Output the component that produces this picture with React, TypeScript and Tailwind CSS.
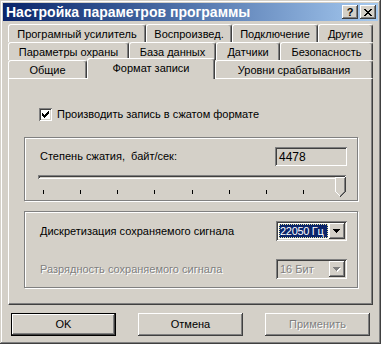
import React from "react";

// Win2k style bevels
const raised =
  "shadow-[inset_-1px_-1px_#404040,inset_1px_1px_#fff,inset_-2px_-2px_#808080,inset_2px_2px_#d4d0c8]";
const sunken =
  "shadow-[inset_1px_1px_#808080,inset_-1px_-1px_#fff,inset_2px_2px_#404040,inset_-2px_-2px_#d4d0c8]";
const etched = "border border-[#808080] shadow-[1px_1px_#fff,inset_1px_1px_#fff]";
const disabledText = "text-[#808080] [text-shadow:1px_1px_0_#fff]";

function Tab({ className, children }: { className: string; children: React.ReactNode }) {
  return (
    <div
      className={`${className} h-[18px] shrink-0 border-t border-l border-r border-t-white border-l-white border-r-[#404040] rounded-t-[3px] shadow-[inset_-1px_0_#808080] flex items-center justify-center pt-[1px] whitespace-nowrap`}
    >
      {children}
    </div>
  );
}

function Triangle({ disabled }: { disabled?: boolean }) {
  const d = "M0 0h7v1h-7z M1 1h5v1h-5z M2 2h3v1h-3z M3 3h1v1h-1z";
  return (
    <svg width="8" height="5" viewBox="0 0 8 5" shapeRendering="crispEdges">
      {disabled && <path d={d} fill="#fff" transform="translate(1 1)" />}
      <path d={d} fill={disabled ? "#808080" : "#000"} />
    </svg>
  );
}

function Combo({ value, disabled }: { value: string; disabled?: boolean }) {
  return (
    <div
      className={`w-[71px] h-[20px] p-[2px] flex ${sunken} ${disabled ? "bg-[#d4d0c8]" : "bg-white"}`}
    >
      {disabled ? (
        <div className={`flex-1 flex items-center pl-[2px] whitespace-nowrap ${disabledText}`}>{value}</div>
      ) : (
        <div className="flex-1 m-[1px] bg-[#0a246a] outline outline-1 outline-dotted outline-[#e8e4a0] -outline-offset-1 text-white flex items-center pl-[1px] tracking-[-0.3px] whitespace-nowrap overflow-hidden">
          {value}
        </div>
      )}
      <div className={`w-[16px] bg-[#d4d0c8] flex items-center justify-center ${raised}`}>
        <Triangle disabled={disabled} />
      </div>
    </div>
  );
}

function Button({
  children,
  isDefault,
  disabled,
}: {
  children: React.ReactNode;
  isDefault?: boolean;
  disabled?: boolean;
}) {
  return (
    <div
      className={`w-[105px] h-[23px] flex items-center justify-center ${raised} ${
        isDefault ? "border border-black" : ""
      } ${disabled ? disabledText : ""}`}
    >
      {children}
    </div>
  );
}

export default function App() {
  return (
    <div className="w-[381px] h-[344px] bg-[#d4d0c8] p-[3px] font-['Liberation_Sans',Arial,sans-serif] text-[11px] leading-none text-black shadow-[inset_-1px_-1px_#404040,inset_1px_1px_#d4d0c8,inset_-2px_-2px_#808080,inset_2px_2px_#fff]">
      {/* Title bar */}
      <div className="h-[18px] flex items-center bg-gradient-to-r from-[#0a246a] to-[#a6caf0] pl-[3px] pr-[2px]">
        <span className="flex-1 text-white font-bold text-[14px] whitespace-nowrap">
          Настройка параметров программы
        </span>
        <div className={`w-[16px] h-[14px] bg-[#d4d0c8] flex items-center justify-center font-bold text-[11px] ${raised}`}>
          ?
        </div>
        <div className={`ml-[2px] w-[16px] h-[14px] bg-[#d4d0c8] flex items-center justify-center ${raised}`}>
          <svg width="8" height="7" viewBox="0 0 8 7" shapeRendering="crispEdges">
            <path
              d="M0 0h2v1h-2z M6 0h2v1h-2z M1 1h2v1h-2z M5 1h2v1h-2z M2 2h4v1h-4z M3 3h2v1h-2z M2 4h4v1h-4z M1 5h2v1h-2z M5 5h2v1h-2z M0 6h2v1h-2z M6 6h2v1h-2z"
              fill="#000"
            />
          </svg>
        </div>
      </div>

      {/* Tabs */}
      <div className="mt-[3px] ml-[5px] w-[365px]">
        <div className="flex">
          <Tab className="w-[138px]">Програмный усилитель</Tab>
          <Tab className="w-[86px]">Воспроизвед.</Tab>
          <Tab className="w-[86px]">Подключение</Tab>
          <Tab className="w-[55px]">Другие</Tab>
        </div>
        <div className="flex">
          <Tab className="w-[121px]">Параметры охраны</Tab>
          <Tab className="w-[87px]">База данных</Tab>
          <Tab className="w-[64px]">Датчики</Tab>
          <Tab className="w-[93px]">Безопасность</Tab>
        </div>
        <div className="flex items-start h-[18px]">
          <Tab className="w-[79px]">Общие</Tab>
          <div className="relative z-10 -mt-[2px] w-[128px] h-[21px] shrink-0 bg-[#d4d0c8] border-t border-l border-r border-t-white border-l-white border-r-[#404040] rounded-t-[3px] shadow-[inset_-1px_0_#808080] flex items-center justify-center pb-[2px]">
            Формат записи
          </div>
          <Tab className="w-[158px]">Уровни срабатывания</Tab>
        </div>

        {/* Panel */}
        <div className="w-[365px] h-[227px] border border-t-white border-l-white border-r-[#404040] border-b-[#404040] shadow-[inset_-1px_-1px_#808080] flex flex-col">
          <div className="mt-[29px] ml-[30px] flex items-center">
            <div className={`w-[13px] h-[13px] bg-white p-[3px] ${sunken}`}>
              <svg width="7" height="7" viewBox="0 0 7 7" shapeRendering="crispEdges" className="block">
                <path
                  d="M6 0h1v1h-1z M5 1h2v1h-2z M0 2h1v1h-1z M4 2h3v1h-3z M0 3h2v1h-2z M3 3h3v1h-3z M0 4h5v1h-5z M1 5h3v1h-3z M2 6h1v1h-1z"
                  fill="#000"
                />
              </svg>
            </div>
            <span className="ml-[5px]">Производить запись в сжатом формате</span>
          </div>

          {/* Compression group */}
          <div className={`mt-[16px] ml-[15px] w-[334px] h-[64px] ${etched}`}>
            <div className="mt-[9px] h-[19px] flex items-center justify-between pl-[15px] pr-[10px]">
              <span>Степень сжатия,&nbsp; байт/сек:</span>
              <div className={`w-[72px] h-[19px] flex items-center pl-[4px] text-[12px] ${sunken}`}>4478</div>
            </div>
            <div className="relative mt-[2px] ml-[13px] w-[308px] h-[29px]">
              <div className="mt-[9px] h-[4px] shadow-[inset_1px_1px_#808080,inset_-1px_-1px_#fff,inset_2px_2px_#404040,inset_-2px_-2px_#d4d0c8]" />
              <div className="mt-[11px] px-[5px] flex justify-between">
                {Array.from({ length: 9 }).map((_, i) => (
                  <div key={i} className="w-px h-[4px] bg-black" />
                ))}
              </div>
              <svg
                className="absolute left-[297px] top-[2px]"
                width="11"
                height="20"
                viewBox="0 0 11 20"
                shapeRendering="crispEdges"
              >
                <polygon points="0,0 11,0 11,14 5.5,20 0,14" fill="#d4d0c8" />
                <path d="M0 0h10v1h-10z M0 1h1v14h-1z" fill="#fff" />
                <path d="M1 15h1v1h-1z M2 16h1v1h-1z M3 17h1v1h-1z M4 18h1v1h-1z" fill="#fff" />
                <path d="M10 0h1v15h-1z M9 15h1v1h-1z M8 16h1v1h-1z M7 17h1v1h-1z M6 18h1v1h-1z M5 19h1v1h-1z" fill="#404040" />
                <path d="M9 1h1v14h-1z M8 15h1v1h-1z M7 16h1v1h-1z M6 17h1v1h-1z M5 18h1v1h-1z" fill="#808080" />
              </svg>
            </div>
          </div>

          {/* Sampling group */}
          <div className={`mt-[10px] ml-[15px] w-[334px] h-[77px] ${etched}`}>
            <div className="mt-[9px] h-[20px] flex items-center justify-between pl-[15px] pr-[10px]">
              <span>Дискретизация сохраняемого сигнала</span>
              <Combo value="22050 Гц" />
            </div>
            <div className="mt-[18px] h-[20px] flex items-center justify-between pl-[15px] pr-[10px]">
              <span className={disabledText}>Разрядность сохраняемого сигнала</span>
              <Combo value="16 Бит" disabled />
            </div>
          </div>
        </div>
      </div>

      {/* Dialog buttons */}
      <div className="mt-[8px] ml-[8px] flex gap-[22px]">
        <Button isDefault>OK</Button>
        <Button>Отмена</Button>
        <Button disabled>Применить</Button>
      </div>
    </div>
  );
}
